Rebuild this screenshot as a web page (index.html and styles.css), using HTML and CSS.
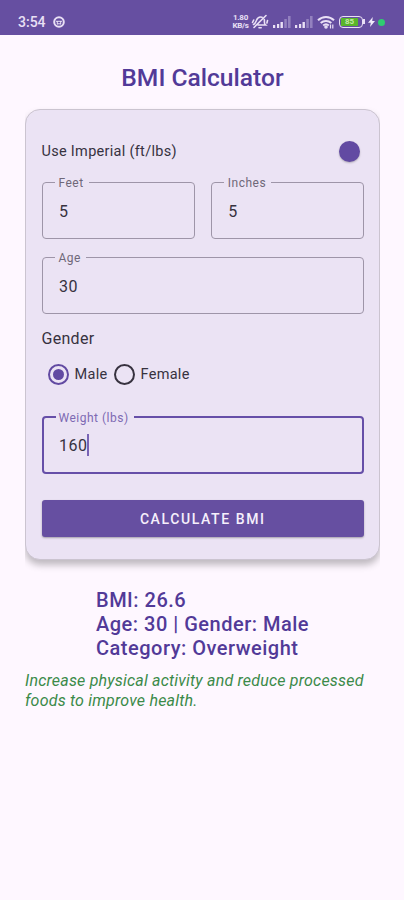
FILE: index.html
```
<!DOCTYPE html>
<html lang="en">
<head>
    <meta charset="UTF-8">
    <meta name="viewport" content="width=device-width, initial-scale=1.0">
    <title>BMI Calculator</title>
    <link rel="stylesheet" href="styles.css">
</head>
<body>
    <!-- Status bar -->
    <div class="status-bar">
        <span class="time">3:54</span>
        <svg class="app-icon" width="12" height="12" viewBox="0 0 12 12" fill="none" stroke="#e9e0f5">
            <circle cx="6" cy="6" r="4.8" stroke-width="2" />
            <path d="M3 5.300h6M4.300 5v3.500M7.700 5v3.500M4.300 7.800h3.400" stroke-width="1" />
        </svg>
        <div class="status-icons">
            <span class="speed">1.80<br>KB/s</span>
            <svg class="mute" width="18" height="16" viewBox="0 0 18 16" fill="none" stroke="#e9e0f5" stroke-width="1.6" stroke-linecap="round">
                <path d="M2.500 10.500c2-.8 2.200-2.500 3-4.300C6.500 3.800 8.500 2.500 11 3.200M13.300 5.500c.5 2-.7 4 1.200 5.500H7M8 13.800h2.200M15 1.500L3 13.500M1.500 8.500l1.200-2.500M16.500 6.500l-.6 2.500" />
            </svg>
            <svg class="signal" width="18" height="12" viewBox="0 0 18 12" fill="#e9e0f5">
                <path d="M0 9h2.200v3H0zM4 8h2.200v4H4zM7.500 6h2.400v6H7.500z" />
                <path d="M11.300 3h2.500v9h-2.500zM15 0h2.600v12H15z" opacity=".35" />
            </svg>
            <svg class="signal" width="18" height="12" viewBox="0 0 18 12" fill="#e9e0f5">
                <path d="M0 9h2.200v3H0zM4 8h2.200v4H4zM7.500 6h2.400v6H7.500z" />
                <path d="M11.300 3h2.500v9h-2.500zM15 0h2.600v12H15z" opacity=".35" />
            </svg>
            <svg class="wifi" width="18" height="14" viewBox="0 0 18 14" fill="none" stroke="#e9e0f5" stroke-width="2">
                <path d="M1 5.200C5.500.8 12.500.8 17 5.200M3.700 8c3-2.800 7.600-2.800 10.600 0M6.200 10.500c1.600-1.400 4-1.400 5.600 0" />
                <circle cx="9" cy="12" r=".8" />
                <path d="M13.500 9.500v4M15.800 9.500v4" stroke-width="1.200" />
            </svg>
            <div class="battery"><span>85</span></div>
            <svg class="bolt" width="7" height="10" viewBox="0 0 7 10" fill="#f1eafa">
                <path d="M4.800 0L0 5.800h2.800L2 10l5-6H4.200z" />
            </svg>
            <span class="dot"></span>
        </div>
    </div>

    <main>
        <h1>BMI Calculator</h1>

        <form class="card">
            <div class="unit-row">
                <span>Use Imperial (ft/lbs)</span>
                <span class="switch-thumb"></span>
            </div>

            <div class="height-row">
                <fieldset class="field">
                    <legend>Feet</legend>
                    <div class="value">5</div>
                </fieldset>
                <fieldset class="field">
                    <legend>Inches</legend>
                    <div class="value">5</div>
                </fieldset>
            </div>

            <fieldset class="field age">
                <legend>Age</legend>
                <div class="value">30</div>
            </fieldset>

            <div class="gender-label">Gender</div>
            <div class="gender-options">
                <span class="radio checked"></span>
                <span class="male">Male</span>
                <span class="radio"></span>
                <span>Female</span>
            </div>

            <fieldset class="field focused">
                <legend>Weight (lbs)</legend>
                <div class="value">160<span class="caret"></span></div>
            </fieldset>

            <button type="button" class="calculate">CALCULATE BMI</button>
        </form>

        <div class="result">
            BMI: 26.6<br>
            Age: 30 | Gender: Male<br>
            Category: Overweight
        </div>
        <p class="advice">Increase physical activity and reduce processed foods to improve health.</p>
    </main>
</body>
</html>
```

FILE: styles.css
```
* {
    box-sizing: border-box;
}

body {
    font-family: Roboto, sans-serif;
    background-color: #fef7ff;
    color: #37323f;
    margin: 0;
    height: 900px;
    overflow: hidden;
}

/* Status bar */
.status-bar {
    display: flex;
    align-items: center;
    height: 35px;
    padding: 9px 19px 0 18px;
    background-color: #664fa1;
    color: #e9e0f5;
}

.time {
    width: 28px;
    font-size: 14px;
    font-weight: 500;
    white-space: nowrap;
}

.app-icon {
    margin-left: 7px;
}

.status-icons {
    display: flex;
    align-items: center;
    margin-left: auto;
}

.speed {
    width: 17px;
    font-size: 8px;
    line-height: 8px;
    font-weight: 700;
    letter-spacing: -0.3px;
    text-align: center;
}

.mute {
    margin-left: 2px;
}

.signal {
    margin-left: 4px;
}

.wifi {
    margin-left: 4px;
}

.battery {
    position: relative;
    width: 24px;
    height: 12px;
    margin-left: 4px;
    padding: 1px;
    border: 1.5px solid #e9e0f5;
    border-radius: 4px;
}

.battery::after {
    content: "";
    position: absolute;
    right: -3px;
    top: 2px;
    width: 2px;
    height: 5px;
    background-color: #e9e0f5;
}

.battery span {
    display: block;
    width: 17px;
    height: 8px;
    background-color: #59b52b;
    color: #c5e8a8;
    font-size: 8px;
    line-height: 8px;
    font-weight: 700;
    text-align: center;
}

.bolt {
    margin-left: 5px;
}

.dot {
    width: 7px;
    height: 7px;
    margin-left: 3px;
    border-radius: 50%;
    background-color: #2fcc71;
}

/* Content */
main {
    padding: 27px 24px 0 25px;
}

h1 {
    margin: 0;
    font-size: 24.6px;
    line-height: 32px;
    font-weight: 500;
    text-align: center;
    color: #523a98;
}

.card {
    height: 451px;
    margin-top: 15px;
    padding: 23px 15px 0 15.5px;
    border: 1px solid #cbc4d0;
    border-radius: 15px;
    background-color: #ebe3f4;
    box-shadow: 0 5px 7px rgba(0, 0, 0, 0.25);
    clip-path: inset(-4px 0 -16px 0);
}

.unit-row {
    display: flex;
    justify-content: space-between;
    align-items: center;
    height: 36px;
    padding-right: 4px;
    font-size: 14.5px;
    letter-spacing: 0.3px;
}

.switch-thumb {
    width: 21px;
    height: 21px;
    border-radius: 50%;
    background-color: #624aa2;
    box-shadow: 0 1px 2px rgba(0, 0, 0, 0.25);
}

.height-row {
    display: flex;
    gap: 16px;
    margin-top: 6px;
}

.field {
    flex: 1;
    min-width: 0;
    height: 64px;
    margin: 0;
    padding: 0 0 0 12px;
    border: 1px solid #9e95a8;
    border-radius: 4px;
}

.field legend {
    height: 14px;
    padding: 0 5px 0 4px;
    font-size: 12px;
    line-height: 16px;
    letter-spacing: 0.5px;
    color: #6f6879;
}

.value {
    display: flex;
    align-items: center;
    height: 44px;
    padding-left: 4.5px;
    font-size: 16px;
    letter-spacing: 0.5px;
}

.age {
    margin-top: 11px;
}

.gender-label {
    margin-top: 14px;
    font-size: 16px;
    line-height: 22px;
    letter-spacing: 0.3px;
}

.gender-options {
    display: flex;
    align-items: center;
    height: 48px;
    padding-left: 6px;
    font-size: 14.5px;
    letter-spacing: 0.3px;
}

.radio {
    width: 21px;
    height: 21px;
    margin-right: 6px;
    border: 2px solid #37323f;
    border-radius: 50%;
}

.radio.checked {
    padding: 3px;
    border-color: #624aa2;
    background-color: #624aa2;
    background-clip: content-box;
}

.male {
    width: 39px;
}

.focused {
    margin-top: 12px;
    border: 2px solid #664fa8;
}

.focused legend {
    padding-left: 3px;
    color: #7d6ab3;
}

.focused .value {
    height: 42px;
    padding-left: 3.5px;
}

.caret {
    width: 2px;
    height: 22px;
    background-color: #7963b5;
}

.calculate {
    display: block;
    width: 100%;
    height: 37px;
    margin-top: 26px;
    border: none;
    border-radius: 3px;
    background-color: #664fa1;
    box-shadow: 0 1px 2px rgba(0, 0, 0, 0.3);
    color: #f6effc;
    font-family: inherit;
    font-size: 14px;
    font-weight: 500;
    letter-spacing: 1.6px;
}

.result {
    width: 216px;
    margin: 28px 0 0 71px;
    font-size: 20px;
    line-height: 24px;
    font-weight: 500;
    letter-spacing: 0.5px;
    white-space: nowrap;
    color: #523a98;
}

.advice {
    margin: 11px 0 0;
    font-size: 16px;
    line-height: 19.5px;
    letter-spacing: 0.2px;
    font-style: italic;
    color: #3b8a49;
}
```
